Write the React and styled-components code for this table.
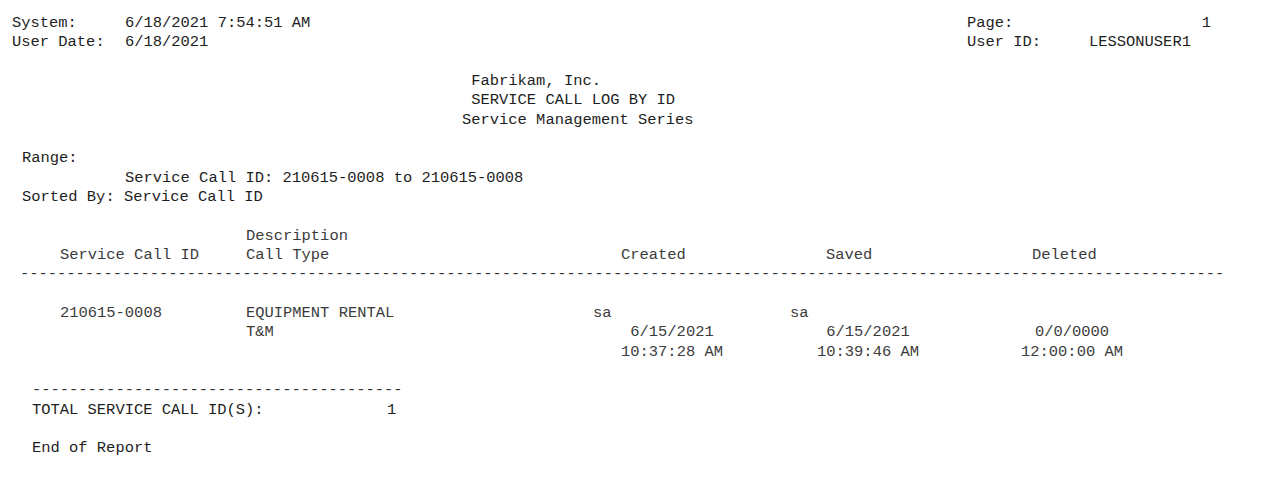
import React from "react";
import styled, { createGlobalStyle } from "styled-components";

const Global = createGlobalStyle`
  html, body { margin: 0; padding: 0; background: #ffffff; }
  body {
    font-family: "Liberation Mono", "Courier New", monospace;
    font-size: 15.45px;
    color: #2e2e2e;
  }
`;

const LINE = 19.33;

const Report = styled.div`
  width: 1272px;
  min-height: 488px;
  box-sizing: border-box;
  padding: 14px 61px 0 0;
  display: flex;
  flex-direction: column;
  white-space: pre;
  line-height: ${LINE}px;
`;

const Row = styled.div`
  display: flex;
  height: ${LINE}px;
  padding-left: ${(p) => p.$indent || 0}px;
  color: ${(p) => (p.$strong ? "#1e1e1e" : "#3c3c3c")};
`;

const Blank = styled.div`
  height: ${(p) => (p.$lines || 1) * LINE}px;
  flex: none;
`;

const Cell = styled.span`
  flex: none;
  width: ${(p) => (p.$w ? `${p.$w}px` : "auto")};
  margin-left: ${(p) => p.$ml || 0}px;
  text-align: ${(p) => p.$align || "left"};
`;

const HeaderBar = styled.div`
  display: flex;
  justify-content: space-between;
  padding-left: 12px;
  color: #1e1e1e;
`;

const InfoGrid = styled.div`
  display: grid;
  grid-template-columns: ${(p) => p.$label}px ${(p) => p.$value}px;
  grid-auto-rows: ${LINE}px;
`;

const Value = styled.span`
  text-align: ${(p) => p.$align || "left"};
`;

const TitleBlock = styled.div`
  padding-left: 462px;
  display: flex;
  flex-direction: column;
  color: #1e1e1e;
`;

const TitleLine = styled.div`
  height: ${LINE}px;
`;

const Dashes = styled.div`
  height: ${LINE}px;
  padding-left: ${(p) => p.$indent}px;
  color: #333333;
`;

const dash = (n) => "-".repeat(n);

export default function App() {
  return (
    <>
      <Global />
      <Report>
        <HeaderBar>
          <InfoGrid $label={113} $value={300}>
            <span>System:</span>
            <Value>6/18/2021 7:54:51 AM</Value>
            <span>User Date:</span>
            <Value>6/18/2021</Value>
          </InfoGrid>
          <InfoGrid $label={122} $value={122}>
            <span>Page:</span>
            <Value $align="right">1</Value>
            <span>User ID:</span>
            <Value>LESSONUSER1</Value>
          </InfoGrid>
        </HeaderBar>

        <Blank />

        <TitleBlock>
          <TitleLine> Fabrikam, Inc.</TitleLine>
          <TitleLine> SERVICE CALL LOG BY ID</TitleLine>
          <TitleLine>Service Management Series</TitleLine>
        </TitleBlock>

        <Blank />

        <Row $indent={22} $strong>
          <Cell>Range:</Cell>
        </Row>
        <Row $indent={125} $strong>
          <Cell>Service Call ID: 210615-0008 to 210615-0008</Cell>
        </Row>
        <Row $indent={22} $strong>
          <Cell>Sorted By: Service Call ID</Cell>
        </Row>

        <Blank />

        <Row $indent={246}>
          <Cell>Description</Cell>
        </Row>
        <Row $indent={60}>
          <Cell $w={186}>Service Call ID</Cell>
          <Cell $w={375}>Call Type</Cell>
          <Cell $w={205}>Created</Cell>
          <Cell $w={206}>Saved</Cell>
          <Cell>Deleted</Cell>
        </Row>
        <Dashes $indent={20}>{dash(130)}</Dashes>

        <Blank />

        <Row $indent={60}>
          <Cell $w={186}>210615-0008</Cell>
          <Cell $w={347}>EQUIPMENT RENTAL</Cell>
          <Cell $w={197}>sa</Cell>
          <Cell>sa</Cell>
        </Row>
        <Row $indent={246}>
          <Cell $w={366}>T&amp;M</Cell>
          <Cell $w={120} $align="center">6/15/2021</Cell>
          <Cell $w={120} $ml={76} $align="center">6/15/2021</Cell>
          <Cell $w={120} $ml={84} $align="center">0/0/0000</Cell>
        </Row>
        <Row $indent={612}>
          <Cell $w={120} $align="center">10:37:28 AM</Cell>
          <Cell $w={120} $ml={76} $align="center">10:39:46 AM</Cell>
          <Cell $w={120} $ml={84} $align="center">12:00:00 AM</Cell>
        </Row>

        <Blank />

        <Dashes $indent={32}>{dash(40)}</Dashes>
        <Row $indent={32} $strong>
          <Cell $w={355}>TOTAL SERVICE CALL ID(S):</Cell>
          <Cell>1</Cell>
        </Row>

        <Blank />

        <Row $indent={32} $strong>
          <Cell>End of Report</Cell>
        </Row>
      </Report>
    </>
  );
}
